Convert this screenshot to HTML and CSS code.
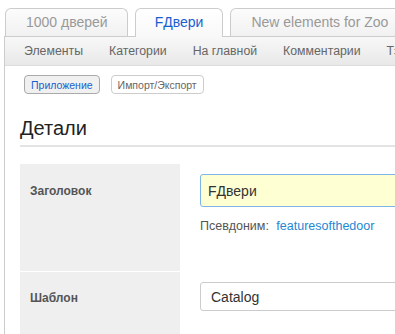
FILE: index.html
```html
<!DOCTYPE html>
<html lang="ru">
<head>
    <meta charset="UTF-8">
    <title>FДвери - Приложение</title>
    <link rel="stylesheet" href="styles.css">
</head>
<body>

    <div class="page">
        <ul class="tabs">
            <li class="tab">1000 дверей</li>
            <li class="tab active">FДвери</li>
            <li class="tab">New elements for Zoo</li>
        </ul>

        <div class="panel">
            <ul class="subnav">
                <li>Элементы</li>
                <li>Категории</li>
                <li>На главной</li>
                <li>Комментарии</li>
                <li>Тэги</li>
            </ul>

            <div class="toolbar">
                <span class="pill current">Приложение</span>
                <span class="pill">Импорт/Экспорт</span>
            </div>

            <div class="content">
                <h2 class="heading">Детали</h2>

                <div class="form-row first">
                    <div class="label">Заголовок</div>
                    <div class="field">
                        <input class="text-input focused" type="text" value="FДвери">
                        <div class="alias">Псевдоним: <a href="#">featuresofthedoor</a></div>
                    </div>
                </div>

                <div class="form-row">
                    <div class="label">Шаблон</div>
                    <div class="field">
                        <div class="select">Catalog</div>
                    </div>
                </div>
            </div>
        </div>
    </div>

</body>
</html>
```

FILE: styles.css
```css
body {
    margin: 0;
    overflow: hidden;
    font-family: "Liberation Sans", Arial, sans-serif;
    background: #fff;
}
.page {
    width: 700px;
}
.tabs {
    list-style: none;
    margin: 0;
    padding: 8px 0 0 5px;
    display: flex;
    gap: 7px;
    position: relative;
    z-index: 2;
}
.tab {
    height: 28px;
    line-height: 27px;
    padding: 0 19px 0 20px;
    font-size: 14px;
    color: #999;
    border: 1px solid #ccc;
    border-bottom: none;
    border-radius: 6px 6px 0 0;
    background: linear-gradient(#fcfcfc, #f1f1f1);
    box-sizing: border-box;
}
.tab.active {
    color: #1a5fcf;
    padding: 0 19px;
    height: 29px;
    margin-bottom: -1px;
    background: linear-gradient(#ffffff, #f8f8f8);
}
.panel {
    margin-left: 4px;
    border-left: 1px solid #ccc;
    min-height: 400px;
}
.subnav {
    list-style: none;
    margin: 0;
    padding: 0 0 0 19px;
    height: 28px;
    display: flex;
    gap: 26px;
    align-items: center;
    font-size: 12.3px;
    color: #666;
    border-top: 1px solid #ccc;
    border-bottom: 1px solid #ddd;
    background: linear-gradient(#f8f8f8, #e8e8e8);
}
.toolbar {
    display: flex;
    gap: 11px;
    padding: 9px 0 0 19px;
}
.pill {
    height: 19px;
    line-height: 18px;
    padding: 0 6px;
    font-size: 10.5px;
    color: #666;
    border: 1px solid #ccc;
    border-radius: 4px;
    background: #fff;
    box-sizing: border-box;
}
.pill.current {
    color: #1a5fcf;
    border-color: #aaa;
    background: #f0f0f0;
}
.content {
    padding-left: 15px;
}
.heading {
    margin: 0;
    padding: 23px 0 0;
    height: 28px;
    font-size: 20px;
    font-weight: normal;
    color: #222;
    border-bottom: 2px solid #e4e4e4;
}
.form-row {
    display: flex;
    border-top: 1px solid #fff;
}
.form-row.first {
    margin-top: 17px;
    border-top: none;
}
.label {
    width: 150px;
    padding: 20px 0 0 10px;
    font-size: 12px;
    font-weight: bold;
    color: #555;
    background: #efefef;
}
.form-row.first .label {
    height: 87px;
}
.form-row + .form-row .label {
    height: 49px;
    padding-top: 19px;
}
.field {
    padding: 10px 0 0 20px;
}
.text-input {
    display: block;
    width: 260px;
    height: 33px;
    padding: 0 7px;
    box-sizing: border-box;
    font-family: "Liberation Sans", Arial, sans-serif;
    font-size: 14px;
    color: #333;
    background: #ffffd4;
    border: 1px solid #7db5e4;
    border-radius: 3px;
    outline: none;
}
.alias {
    margin-top: 12px;
    font-size: 12.5px;
    color: #555;
}
.alias a {
    margin-left: 4px;
    color: #1e88d4;
    text-decoration: none;
}
.select {
    width: 260px;
    height: 29px;
    line-height: 28px;
    padding: 0 10px;
    box-sizing: border-box;
    font-size: 14px;
    color: #333;
    border: 1px solid #ccc;
    border-radius: 3px;
}
```
